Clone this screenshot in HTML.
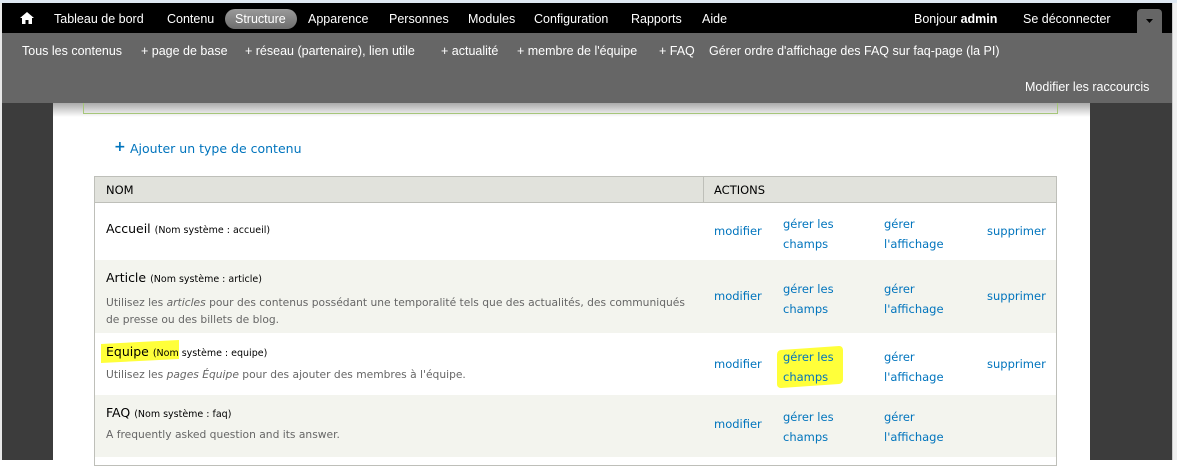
<!DOCTYPE html>
<html><head><meta charset="utf-8"><style>
*{margin:0;padding:0;box-sizing:border-box}
body{width:1177px;height:460px;overflow:hidden;position:relative;background:#fff;font-family:"DejaVu Sans","Liberation Sans",sans-serif;}
.a{position:absolute;white-space:nowrap}
#top{position:absolute;left:0;top:0;width:1177px;height:3px;background:#dfe8f2}
#bar{position:absolute;left:2px;top:3px;width:1170px;height:30px;background:#000}
#sc{position:absolute;left:2px;top:33px;width:1170px;height:70px;background:#666}
.w{color:#fff;font-size:12.5px;font-family:"Liberation Sans",sans-serif}
.s{color:#fff;font-size:12.5px;font-family:"Liberation Sans",sans-serif}
#ld{position:absolute;left:2px;top:103px;width:51px;height:357px;background:#3c3c3c}
#rd{position:absolute;left:1090px;top:103px;width:82px;height:357px;background:#3c3c3c}
#sb{position:absolute;left:1172px;top:3px;width:5px;height:457px;background:#f0f0f0;border-left:1px solid #ccc}
#lb{position:absolute;left:0;top:3px;width:2px;height:457px;background:#e8e8e8}
#green{position:absolute;left:83px;top:103px;width:975px;height:11px;border:1px solid #a6c67a;border-top:none;z-index:2}
#shadow{position:absolute;left:53px;top:103px;width:1037px;height:14px;background:linear-gradient(#aaa,#fff)}
#tbl{position:absolute;left:94px;top:176px;width:963px;height:290px;border:1px solid #bebfb9}
.row{position:absolute;left:0;width:961px}
.l{color:#0074bd;font-size:11.5px}
.t{color:#000;font-size:12.5px}
.t small{font-size:9.5px}
.d{color:#666;font-size:10.7px}
.hl{background:#ffff3a}
</style></head><body>
<div id="top"></div><div id="lb"></div>
<div id="bar"></div>
<svg class="a" style="left:20px;top:12px" width="14" height="12" viewBox="0 0 14 12"><path d="M7 0 L14 6 L12 6 L12 12 L8.5 12 L8.5 8 L5.5 8 L5.5 12 L2 12 L2 6 L0 6 Z" fill="#fff"/></svg>
<span class="a w" style="left:54px;top:12px">Tableau de bord</span>
<span class="a w" style="left:167px;top:12px">Contenu</span>
<div class="a" style="left:225px;top:9px;width:72px;height:20px;border-radius:10px;background:linear-gradient(#9a9a9a,#6d6d6d)"></div>
<span class="a w" style="left:235px;top:12px">Structure</span>
<span class="a w" style="left:308px;top:12px">Apparence</span>
<span class="a w" style="left:389px;top:12px">Personnes</span>
<span class="a w" style="left:468px;top:12px">Modules</span>
<span class="a w" style="left:534px;top:12px">Configuration</span>
<span class="a w" style="left:631px;top:12px">Rapports</span>
<span class="a w" style="left:702px;top:12px">Aide</span>
<span class="a w" style="left:914px;top:12px">Bonjour <b>admin</b></span>
<span class="a w" style="left:1023px;top:12px">Se déconnecter</span>
<div class="a" style="left:1137px;top:9px;width:25px;height:25px;background:#666;border-radius:4px 4px 0 0"></div>
<svg class="a" style="left:1146px;top:19px" width="7" height="4"><path d="M0 0H7L3.5 4Z" fill="#000"/></svg>
<div id="sc"></div>
<span class="a s" style="left:22px;top:44px">Tous les contenus</span>
<span class="a s" style="left:141px;top:44px">+ page de base</span>
<span class="a s" style="left:245px;top:44px">+ réseau (partenaire), lien utile</span>
<span class="a s" style="left:441px;top:44px">+ actualité</span>
<span class="a s" style="left:517px;top:44px">+ membre de l'équipe</span>
<span class="a s" style="left:659px;top:44px">+ FAQ</span>
<span class="a s" style="left:709px;top:44px">Gérer ordre d'affichage des FAQ sur faq-page (la PI)</span>
<span class="a s" style="left:1025px;top:80px">Modifier les raccourcis</span>
<div id="ld"></div><div id="rd"></div><div id="sb"></div>
<div id="shadow"></div>
<div id="green"></div>
<span class="a" style="left:114px;top:139px;color:#0074bd;font-size:14px;font-weight:bold">+</span>
<span class="a" style="left:130px;top:141px;color:#0074bd;font-size:12.5px">Ajouter un type de contenu</span>
<div id="tbl">
<div class="row" style="top:0;height:26px;background:#e1e2dc;border-bottom:1px solid #bebfb9"></div>
<div class="a" style="left:608px;top:0;width:1px;height:26px;background:#bebfb9"></div>
<span class="a" style="left:11px;top:6px;font-size:11.5px;color:#000">NOM</span>
<span class="a" style="left:619px;top:6px;font-size:11.5px;color:#000">ACTIONS</span>
<div class="row" style="top:26px;height:57px;background:#fff"></div>
<div class="row" style="top:83px;height:73px;background:#f3f4ee"></div>
<div class="row" style="top:156px;height:62px;background:#fff"></div>
<div class="row" style="top:218px;height:62px;background:#f3f4ee"></div>
</div>
<span class="a t" style="left:106px;top:221px">Accueil <small>(Nom système : accueil)</small></span>
<span class="a t" style="left:106px;top:270px">Article <small>(Nom système : article)</small></span>
<span class="a d" style="left:106px;top:294px;line-height:17px">Utilisez les <i>articles</i> pour des contenus possédant une temporalité tels que des actualités, des communiqués<br>de presse ou des billets de blog.</span>
<div class="a hl" style="left:101px;top:342px;width:78px;height:19px;transform:skewY(-3deg)"></div>
<span class="a t" style="left:106px;top:344px">Equipe <small>(Nom système : equipe)</small></span>
<span class="a d" style="left:106px;top:368px">Utilisez les <i>pages Équipe</i> pour des ajouter des membres à l'équipe.</span>
<span class="a t" style="left:106px;top:405px">FAQ <small>(Nom système : faq)</small></span>
<span class="a d" style="left:106px;top:428px">A frequently asked question and its answer.</span>
<div class="a hl" style="left:777px;top:348px;width:66px;height:38px;border-radius:4px;transform:skewY(-4deg)"></div>
<div class="a l" style="left:714px;top:224px">modifier</div>
<div class="a l" style="left:783px;top:214px;line-height:20px">gérer les<br>champs</div>
<div class="a l" style="left:884px;top:214px;line-height:20px">gérer<br>l'affichage</div>
<div class="a l" style="left:987px;top:224px">supprimer</div>
<div class="a l" style="left:714px;top:289px">modifier</div>
<div class="a l" style="left:783px;top:279px;line-height:20px">gérer les<br>champs</div>
<div class="a l" style="left:884px;top:279px;line-height:20px">gérer<br>l'affichage</div>
<div class="a l" style="left:987px;top:289px">supprimer</div>
<div class="a l" style="left:714px;top:357px">modifier</div>
<div class="a l" style="left:783px;top:347px;line-height:20px">gérer les<br>champs</div>
<div class="a l" style="left:884px;top:347px;line-height:20px">gérer<br>l'affichage</div>
<div class="a l" style="left:987px;top:357px">supprimer</div>
<div class="a l" style="left:714px;top:417px">modifier</div>
<div class="a l" style="left:783px;top:407px;line-height:20px">gérer les<br>champs</div>
<div class="a l" style="left:884px;top:407px;line-height:20px">gérer<br>l'affichage</div>
</body></html>
